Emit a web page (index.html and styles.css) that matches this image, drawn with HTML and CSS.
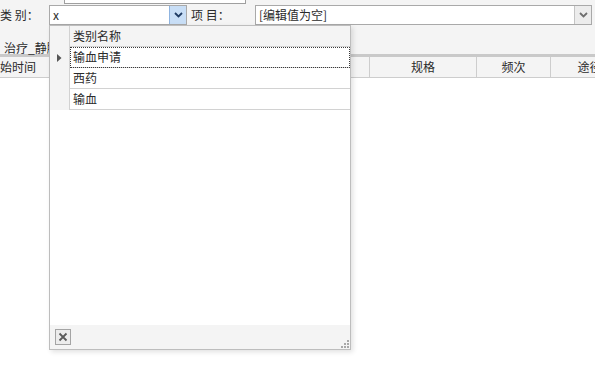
FILE: index.html
```html
<!DOCTYPE html>
<html>
  <head>
    <title>类别选择</title>
    <link rel="stylesheet" href="styles.css">
  </head>
  <body>
    <div class="toolbar">
      <span class="label">类 别：</span>
      <div class="combo combo-type">
        <span class="combo-text">x</span>
        <span class="combo-btn combo-btn-hot">
          <svg width="9" height="6" viewBox="0 0 9 6"><path d="M1 1 L4.5 4.5 L8 1" fill="none" stroke="#1f3b63" stroke-width="1.8"/></svg>
        </span>
      </div>
      <span class="label label-item">项 目：</span>
      <div class="combo combo-item">
        <span class="combo-text">[编辑值为空]</span>
        <span class="combo-btn">
          <svg width="9" height="6" viewBox="0 0 9 6"><path d="M1 1 L4.5 4.5 L8 1" fill="none" stroke="#6e6e6e" stroke-width="1.8"/></svg>
        </span>
      </div>
    </div>

    <div class="tabbar"><span class="tab">治疗_静脉输液</span></div>
    <div class="band"></div>

    <div class="grid-head">
      <div class="head-cell cell-time">始时间</div>
      <div class="head-cell cell-spec">规格</div>
      <div class="head-cell cell-freq">频次</div>
      <div class="head-cell cell-way">途径</div>
    </div>
    <div class="grid-body"></div>

    <!-- leftover popup edge above the combo -->
    <div class="top-box"></div>

    <!-- dropdown list of the 类别 combo -->
    <div class="popup">
      <div class="pop-row pop-head">
        <div class="ind"></div>
        <div class="pop-cell">类别名称</div>
      </div>
      <div class="pop-row">
        <div class="ind">
          <svg width="5" height="8" viewBox="0 0 5 8"><path d="M0 0 L4.5 4 L0 8 Z" fill="#555"/></svg>
        </div>
        <div class="pop-cell pop-focus">输血申请</div>
      </div>
      <div class="pop-row">
        <div class="ind"></div>
        <div class="pop-cell">西药</div>
      </div>
      <div class="pop-row">
        <div class="ind"></div>
        <div class="pop-cell">输血</div>
      </div>
      <div class="pop-body"></div>
      <div class="pop-foot">
        <span class="close-btn">
          <svg width="10" height="10" viewBox="0 0 10 10"><path d="M1.5 1.5 L8.5 8.5 M8.5 1.5 L1.5 8.5" stroke="#5a5a5a" stroke-width="1.8"/></svg>
        </span>
        <span class="grip">
          <svg width="8" height="8" viewBox="0 0 8 8" fill="#a8a8a8">
            <rect x="6" y="0" width="2" height="2"/>
            <rect x="3" y="3" width="2" height="2"/><rect x="6" y="3" width="2" height="2"/>
            <rect x="0" y="6" width="2" height="2"/><rect x="3" y="6" width="2" height="2"/><rect x="6" y="6" width="2" height="2"/>
          </svg>
        </span>
      </div>
    </div>
  </body>
</html>
```

FILE: styles.css
```css
body {
  margin: 0;
  width: 595px;
  height: 367px;
  overflow: hidden;
  position: relative;
  background: #ffffff;
  font-family: "Noto Sans CJK SC", "Microsoft YaHei", sans-serif;
  font-size: 12px;
  color: #2b2b2b;
}

.toolbar {
  display: flex;
  align-items: flex-start;
  height: 30px;
  padding-top: 5px;
  box-sizing: border-box;
  background: #f4f4f4;
}

.label {
  width: 49px;
  line-height: 20px;
  white-space: nowrap;
}

.label-item {
  width: 64px;
  margin-left: 4px;
}

.combo {
  display: flex;
  height: 20px;
  box-sizing: border-box;
  border: 1px solid #a9a9a9;
  background: #ffffff;
}

.combo-type {
  width: 138px;
}

.combo-item {
  width: 337px;
}

.combo-text {
  flex: 1;
  padding-left: 3px;
  line-height: 18px;
  white-space: nowrap;
}

.combo-btn {
  width: 16px;
  display: flex;
  align-items: center;
  justify-content: center;
  border-left: 1px solid #c4c4c4;
  background: #ececec;
}

.combo-btn-hot {
  border-left-color: #8fb4e0;
  background: #c8def6;
}

.tabbar {
  height: 24px;
  box-sizing: border-box;
  padding: 9px 0 0 4px;
  background: #f4f4f4;
}

.tab {
  line-height: 16px;
  white-space: nowrap;
}

.band {
  height: 3px;
  background: #c9c9c9;
}

.grid-head {
  display: flex;
  height: 21px;
  box-sizing: border-box;
  border-bottom: 1px solid #cdcdcd;
  background: #f4f4f4;
  white-space: nowrap;
  overflow: hidden;
}

.head-cell {
  flex: none;
  box-sizing: border-box;
  line-height: 20px;
  text-align: center;
  border-right: 1px solid #cdcdcd;
}

.cell-time {
  width: 370px;
  text-align: left;
}

.cell-spec {
  width: 107px;
}

.cell-freq {
  width: 74px;
}

.cell-way {
  width: 78px;
}

.top-box {
  position: absolute;
  left: 64px;
  top: -20px;
  width: 182px;
  height: 24px;
  box-sizing: border-box;
  border: 1px solid #9f9f9f;
  background: #ffffff;
}

.popup {
  position: absolute;
  left: 49px;
  top: 25px;
  width: 302px;
  height: 325px;
  box-sizing: border-box;
  border: 1px solid #bdbdbd;
  background: #ffffff;
  box-shadow: 2px 2px 5px rgba(0, 0, 0, 0.12);
  display: flex;
  flex-direction: column;
}

.pop-row {
  display: flex;
  height: 21px;
}

.ind {
  width: 19px;
  flex: none;
  display: flex;
  align-items: center;
  justify-content: center;
  background: #f4f4f4;
  border-right: 1px solid #d2d2d2;
}

.pop-cell {
  flex: 1;
  box-sizing: border-box;
  padding-left: 3px;
  line-height: 20px;
  border-bottom: 1px solid #d2d2d2;
}

.pop-head .pop-cell {
  background: #f4f4f4;
}

.pop-focus {
  outline: 1px dotted #3a3a3a;
  outline-offset: -1px;
}

.pop-body {
  flex: 1;
}

.pop-foot {
  height: 24px;
  display: flex;
  align-items: flex-start;
  justify-content: space-between;
  background: #f4f4f4;
}

.close-btn {
  width: 16px;
  height: 16px;
  margin: 4px 0 0 5px;
  box-sizing: border-box;
  border: 1px solid #a4a4a4;
  background: #ececec;
  display: flex;
  align-items: center;
  justify-content: center;
}

.grip {
  align-self: flex-end;
  margin: 0 1px 1px 0;
  line-height: 0;
}
```
